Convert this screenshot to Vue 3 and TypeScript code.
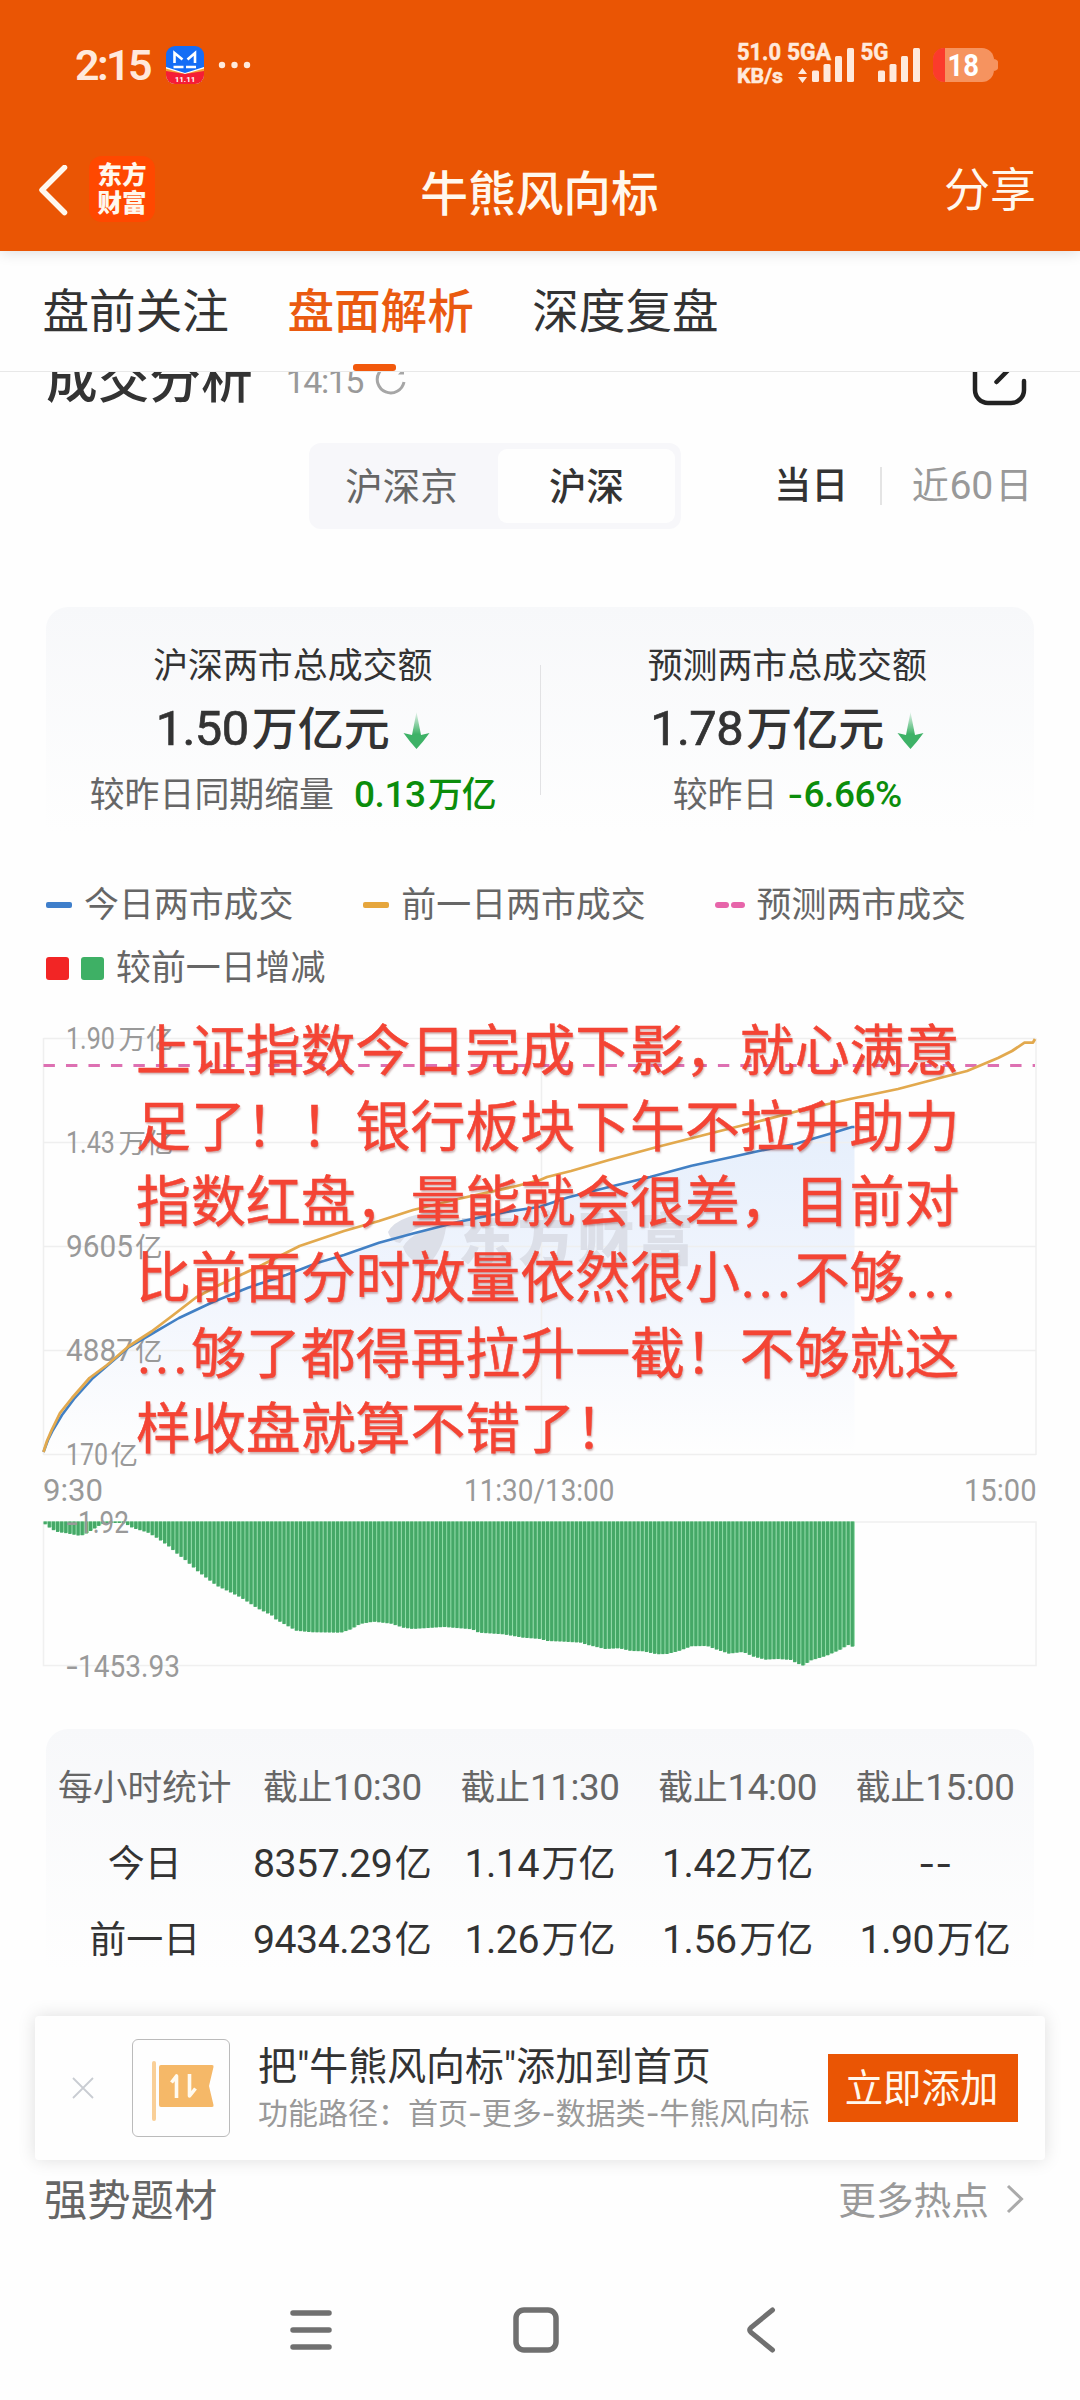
<script setup lang="ts">
import { h, type FunctionalComponent } from 'vue'

// Mixed text: digits, hyphens and ideographs each get their own span.
const Mix: FunctionalComponent<{ t: string }> = (props) =>
  h(
    'span',
    { class: 'mix' },
    (props.t.match(/[0-9.:/%]+|-+|[^0-9.:/%-]+/g) ?? []).map((s) =>
      h('span', { class: /^[0-9]/.test(s) ? 'num' : s[0] === '-' ? 'dash' : 'han' }, s),
    ),
  )
Mix.props = ['t']

type Pt = [number, number]

const tabs = ['盘前关注', '盘面解析', '深度复盘']

const yLabels = [
  { n: '1.90', u: '万亿', y: 1049, w: 49, ux: 118.5 },
  { n: '1.43', u: '万亿', y: 1153, w: 49, ux: 118.5 },
  { n: '9605', u: '亿', y: 1257, w: 67, ux: 135 },
  { n: '4887', u: '亿', y: 1360.5, w: 67, ux: 135 },
  { n: '170', u: '亿', y: 1464.5, w: 42, ux: 110.5 },
]
const gridY = [1038.5, 1142.5, 1246.5, 1350.5, 1454.5]

const prev: Pt[] = [
  [43.5, 1452], [47, 1441], [51.7, 1430], [60, 1413], [72, 1398], [89.5, 1378], [107, 1365], [129, 1346],
  [151.5, 1331.5], [172, 1316], [196, 1297.5], [217, 1286], [262, 1265], [299.6, 1246], [344, 1231],
  [379, 1221], [413, 1210], [458, 1199], [516.5, 1186], [540, 1180], [547, 1177], [571, 1171], [609, 1160],
  [657, 1147], [712, 1133], [760, 1121], [802, 1110], [850, 1099], [898, 1089], [936, 1079], [967, 1071],
  [998, 1058], [1012, 1051], [1024.5, 1042.7], [1033, 1042.5], [1035, 1039],
]
const today: Pt[] = [
  [43.5, 1452], [48, 1440], [53, 1430], [62, 1415], [74, 1399], [93, 1378], [129, 1347], [151.5, 1334],
  [179, 1318], [213.5, 1301.7], [248, 1287.7], [286, 1275], [317, 1263], [344, 1255], [379, 1242.7],
  [413, 1233.5], [458, 1222], [506, 1212], [540, 1206.7], [567.5, 1197.5], [609, 1187], [650, 1177],
  [691.5, 1165.7], [733, 1156.7], [760, 1150.7], [795, 1144], [829, 1134], [852, 1127], [854.5, 1127],
]
const line = (p: Pt[]) => p.map(([x, y]) => `${x},${y}`).join(' ')
const area = `${line(today)} 854.5,1454 43.5,1454`

// Depth of the green columns, as [x, y] knots joined linearly.
const depth: Pt[] = [
  [43, 1522.5], [48, 1526.7], [53, 1530], [58.5, 1532.3], [65, 1533], [79, 1535.7], [84, 1535], [91, 1530.7],
  [96, 1527.7], [101.6, 1524], [110, 1522.7], [119, 1522.3], [125.7, 1524], [132.6, 1528], [148, 1532.7],
  [158, 1538.7], [169, 1546.7], [177, 1553.7], [186, 1560.7], [198, 1571.7], [217, 1586], [225.5, 1590],
  [241, 1597.7], [258, 1608.7], [272, 1615.7], [275.5, 1619.3], [296, 1630.7], [311.6, 1632.3], [341, 1632.7],
  [351, 1629.3], [360, 1624], [373.6, 1621.7], [391, 1623.7], [403, 1627.7], [413, 1629], [444, 1627],
  [472, 1629.3], [478.6, 1632.7], [503, 1634.3], [523, 1637.7], [540, 1639], [547, 1641], [564, 1641.7],
  [581, 1642.7], [586.5, 1644.7], [605, 1649], [619, 1648.3], [631, 1651], [643, 1651.3], [657, 1654.3],
  [667, 1654], [678, 1651.3], [691.5, 1646.3], [707, 1646], [715.6, 1649.3], [729, 1653.7], [743, 1652],
  [753.5, 1656.7], [765.5, 1659.7], [777.6, 1659], [791, 1660], [796.5, 1663.3], [803.4, 1665.7],
  [810, 1660.7], [826, 1656], [839.6, 1650], [848, 1645], [854, 1647.3],
]
const at = (x: number) => {
  const i = Math.max(1, depth.findIndex((p) => p[0] >= x))
  const [a, b] = [depth[i - 1], depth[i]]
  return a[1] + ((b[1] - a[1]) * (x - a[0])) / (b[0] - a[0])
}
const bars = Array.from({ length: 197 }, (_, i) => {
  const x = 43.6 + i * 4.118
  return { x, h: Math.max(1, at(Math.min(x + 1.6, 853.5)) - 1522) }
})

const note = [
  '上证指数今日完成下影，就心满意',
  '足了！！银行板块下午不拉升助力',
  '指数红盘，量能就会很差，目前对',
  '比前面分时放量依然很小…不够…',
  '…够了都得再拉升一截！不够就这',
  '样收盘就算不错了！',
].map((s) => s.split(''))

const rows = [
  ['每小时统计', '截止10:30', '截止11:30', '截止14:00', '截止15:00'],
  ['今日', '8357.29亿', '1.14万亿', '1.42万亿', '--'],
  ['前一日', '9434.23亿', '1.26万亿', '1.56万亿', '1.90万亿'],
]
</script>

<template>
  <div class="screen">
    <header class="top">
      <div class="status">
        <span class="clock">2:15</span>
        <svg class="app" width="38" height="38" viewBox="0 0 38 38">
          <defs><clipPath id="appc"><rect width="38" height="38" rx="9" /></clipPath></defs>
          <g clip-path="url(#appc)">
            <rect width="38" height="38" fill="#156df5" />
            <path d="M0 21 L19 27 L38 21 V38 H0Z" fill="#fff" />
            <path d="M0 22.500 L19 28 L38 22.500 V38 H0Z" fill="#f5a13a" />
            <path d="M0 25 L19 28 L38 25 V38 H0Z" fill="#f51d35" />
            <path d="M8.500 17 V7 L16.500 13.500 M21.500 13.500 L29 7 V17" fill="none" stroke="#fff" stroke-width="2.600" />
            <path d="M7.500 21 H17.500 M20 21 H30" stroke="#fff" stroke-width="2.400" />
          </g>
          <text x="19" y="35.500" class="tiny" text-anchor="middle">11.11</text>
        </svg>
        <svg class="dots" width="34" height="8" viewBox="0 0 34 8" fill="#ffe9dc">
          <circle cx="4" cy="4" r="3.200" /><circle cx="16.500" cy="4" r="3.200" /><circle cx="29" cy="4" r="3.200" />
        </svg>
        <svg class="signals" width="264" height="50" viewBox="736 40 264 50" fill="#ffe9dc">
          <g stroke="#ffe9dc" stroke-width=".5">
            <text x="737" y="60" class="sig" textLength="44" lengthAdjust="spacingAndGlyphs">51.0</text>
            <text x="737" y="83" class="sig small" textLength="46" lengthAdjust="spacingAndGlyphs">KB/s</text>
            <text x="787" y="60" class="sig" textLength="44" lengthAdjust="spacingAndGlyphs">5GA</text>
            <text x="860.500" y="60" class="sig" textLength="28" lengthAdjust="spacingAndGlyphs">5G</text>
          </g>
          <path d="M802.500 68 l4.500 6 h-9z M802.500 83 l4.500 -6 h-9z" />
          <rect x="812" y="70.500" width="7" height="11.500" rx="1.500" /><rect x="823.500" y="64" width="7" height="18" rx="1.500" />
          <rect x="835" y="56" width="7" height="26" rx="1.500" /><rect x="847" y="48" width="7" height="34" rx="1.500" />
          <rect x="878" y="70.500" width="7" height="11.500" rx="1.500" /><rect x="889.500" y="64" width="7" height="18" rx="1.500" />
          <rect x="901" y="56" width="7" height="26" rx="1.500" /><rect x="913" y="48" width="7" height="34" rx="1.500" />
          <rect x="933" y="48" width="61" height="34" rx="12" fill="#f6935f" />
          <path d="M994 59 q4 1 4 3 v6 q0 2 -4 3z" fill="#f6935f" />
          <path d="M945 48 h-1 a11 11 0 0 0 -11 11 v12 a11 11 0 0 0 11 11 h1z" fill="#fb3b2c" />
          <text x="947.500" y="75.500" class="sig pct" textLength="31.500" lengthAdjust="spacingAndGlyphs">18</text>
        </svg>
      </div>
      <div class="nav">
        <svg width="32" height="52" viewBox="0 0 32 52" fill="none" stroke="#fff8ee" stroke-width="5.500" stroke-linecap="round" stroke-linejoin="round">
          <path d="M26.500 2.500 L4 25 L26.500 47.500" />
        </svg>
        <div class="logo"><span>东方</span><span>财富</span></div>
        <h1>牛熊风向标</h1>
        <span class="share">分享</span>
      </div>
    </header>

    <nav class="tabs">
      <span v-for="(t, i) in tabs" :key="t" :class="{ on: i === 1 }">{{ t }}</span>
    </nav>

    <section class="heading">
      <div class="heading-in">
        <h2>成交分析</h2>
        <span class="time">14:15</span>
        <svg class="reload" width="34" height="34" viewBox="0 0 34 34" fill="none" stroke="#a6a6a6" stroke-width="3">
          <path d="M26 6.500 A13.500 13.500 0 1 0 30 19" /><path d="M24 11.500 H30 V5Z" fill="#a6a6a6" stroke="none" />
        </svg>
        <svg class="edit" width="56" height="56" viewBox="0 0 56 56" fill="none" stroke="#222" stroke-width="4.500" stroke-linecap="round">
          <path d="M28 3 H16 A12 12 0 0 0 4 15 V37 A13 13 0 0 0 17 50 H40 A13 13 0 0 0 53 37 V28" /><path d="M25.500 29 L50 4" />
        </svg>
      </div>
    </section>

    <section class="switches">
      <div class="seg"><span>沪深京</span><span class="on">沪深</span></div>
      <div class="range"><b>当日</b><i></i><Mix t="近60日" /></div>
    </section>

    <section class="summary">
      <div class="cell">
        <p class="k">沪深两市总成交额</p>
        <p class="v"><Mix t="1.50万亿元" />
          <svg width="27" height="37" viewBox="0 0 27 37"><defs><linearGradient id="ga" x1="0" y1="0" x2="0" y2="1"><stop offset="0" stop-color="#3eb267" stop-opacity=".1" /><stop offset=".6" stop-color="#3eb267" /></linearGradient></defs><path d="M13.500 0 L18 23 L26.500 21 Q20 30 13.500 37 Q7 30 .5 21 L9 23Z" fill="url(#ga)" /></svg>
        </p>
        <p class="d">较昨日同期缩量<em class="wide"><Mix t="0.13万亿" /></em></p>
      </div>
      <i class="rule"></i>
      <div class="cell">
        <p class="k">预测两市总成交额</p>
        <p class="v"><Mix t="1.78万亿元" />
          <svg width="27" height="37" viewBox="0 0 27 37"><path d="M13.500 0 L18 23 L26.500 21 Q20 30 13.500 37 Q7 30 .5 21 L9 23Z" fill="url(#ga)" /></svg>
        </p>
        <p class="d">较昨日<em><Mix t="-6.66%" /></em></p>
      </div>
    </section>

    <section class="legend">
      <div class="lrow">
        <span class="l1"><i class="bar blue"></i>今日两市成交</span>
        <span class="l2"><i class="bar gold"></i>前一日两市成交</span>
        <span class="l3"><i class="dot"></i><i class="dot"></i>预测两市成交</span>
      </div>
      <div class="lrow">
        <span class="l4"><i class="sq red"></i><i class="sq green"></i>较前一日增减</span>
      </div>
    </section>

    <section class="charts">
      <svg width="1080" height="700" viewBox="0 1000 1080 700">
        <defs>
          <linearGradient id="fill" x1="0" y1="1127" x2="0" y2="1454" gradientUnits="userSpaceOnUse">
            <stop offset="0" stop-color="#e6effc" /><stop offset=".5" stop-color="#f1f5fd" /><stop offset="1" stop-color="#fefefe" />
          </linearGradient>
        </defs>
        <polygon :points="area" fill="url(#fill)" />
        <g stroke="#efefef" stroke-width="1.500">
          <path v-for="y in gridY" :key="y" :d="`M43.500 ${y} H1036`" />
          <path d="M43.500 1038 V1455 M541.500 1038 V1455 M1036 1038 V1455" />
        </g>
        <g fill="#dcdfe8">
          <path d="M388 1232 Q398 1213 447 1211 Q436 1216 430 1226 Q412 1226 400 1243 Q391 1242 388 1232Z" />
          <path d="M403 1247 Q412 1230 446 1227 Q443 1252 424 1269 Q422 1260 415 1261 Q407 1258 403 1247Z" />
          <text x="458" y="1260" class="mark" textLength="236">东方财富</text>
        </g>
        <g class="axis">
          <template v-for="l in yLabels" :key="l.y">
            <text x="66" :y="l.y" :textLength="l.w" lengthAdjust="spacingAndGlyphs">{{ l.n }}</text>
            <text :x="l.ux" :y="l.y" class="unit">{{ l.u }}</text>
          </template>
        </g>
        <path d="M43.500 1065.500 H1035" stroke="#dd70b2" stroke-width="2.800" stroke-dasharray="11.400 11.080" />
        <polyline :points="line(today)" fill="none" stroke="#4280c4" stroke-width="2.600" stroke-linejoin="round" />
        <polyline :points="line(prev)" fill="none" stroke="#e2a94e" stroke-width="2.800" stroke-linejoin="round" />

        <g class="axis">
          <text x="43" y="1501" textLength="60" lengthAdjust="spacingAndGlyphs">9:30</text>
          <text x="464" y="1501" textLength="150.500" lengthAdjust="spacingAndGlyphs">11:30/13:00</text>
          <text x="964" y="1501" textLength="72.500" lengthAdjust="spacingAndGlyphs">15:00</text>
        </g>
        <rect x="43.500" y="1522" width="992.500" height="143.500" fill="none" stroke="#f0f0f0" stroke-width="1.500" />
        <g fill="#8edba6"><rect v-for="b in bars" :key="b.x" :x="b.x" y="1521.500" width="4.118" :height="b.h" /></g>
        <g fill="#45a867"><rect v-for="b in bars" :key="b.x" :x="b.x" y="1521.500" width="3.100" :height="b.h + .5" /></g>
        <g class="axis">
          <text x="65" y="1532.500" class="hy" textLength="14" lengthAdjust="spacingAndGlyphs">-</text>
          <text x="78" y="1532.500" textLength="51" lengthAdjust="spacingAndGlyphs">1.92</text>
          <text x="65" y="1677" class="hy" textLength="14" lengthAdjust="spacingAndGlyphs">-</text>
          <text x="78" y="1677" textLength="102" lengthAdjust="spacingAndGlyphs">1453.93</text>
        </g>
      </svg>
      <div class="note">
        <p v-for="(l, i) in note" :key="i"><span v-for="(c, j) in l" :key="j" :class="{ el: c === '…' }">{{ c === '…' ? '...' : c }}</span></p>
      </div>
    </section>

    <section class="table">
      <div v-for="(r, i) in rows" :key="i" class="tr" :class="{ th: i === 0 }">
        <span v-for="c in r" :key="c"><Mix :t="c" /></span>
      </div>
    </section>

    <aside class="banner">
      <svg class="close" width="22" height="22" viewBox="0 0 22 22" stroke="#c9ccd2" stroke-width="1.800"><path d="M1 1 L21 21 M21 1 L1 21" /></svg>
      <div class="flag">
        <svg width="98" height="98" viewBox="0 0 98 98">
          <rect x="19" y="21" width="4" height="60" rx="2" fill="#f9cf97" />
          <path d="M28 25 H79 Q81 25 80.500 27 L76 46 L80.500 65 Q81 67 79 67 H28 Q26 67 26 65 V27 Q26 25 28 25Z" fill="#f5b868" />
          <path d="M38.500 42.500 L43.500 36 V58 M56.500 34 V56 L62.500 48.500" fill="none" stroke="#fffaf0" stroke-width="3.600" stroke-linejoin="round" />
        </svg>
      </div>
      <div class="msg">
        <p class="t">把"牛熊风向标"添加到首页</p>
        <p class="s"><Mix t="功能路径：首页-更多-数据类-牛熊风向标" /></p>
      </div>
      <button>立即添加</button>
    </aside>

    <section class="more">
      <span>强势题材</span>
      <span class="r">更多热点
        <svg width="18" height="30" viewBox="0 0 18 30" fill="none" stroke="#aaa" stroke-width="3"><path d="M2 2 L15.500 15 L2 28" /></svg>
      </span>
    </section>

    <footer class="sys">
      <svg width="44" height="44" viewBox="0 0 44 44" stroke="#707070" stroke-width="5.500" stroke-linecap="round"><path d="M4 5 H40 M4 22 H40 M4 39 H40" /></svg>
      <svg width="46" height="46" viewBox="0 0 46 46" fill="none" stroke="#707070" stroke-width="5.500"><rect x="3" y="3" width="40" height="40" rx="8" /></svg>
      <svg width="30" height="46" viewBox="0 0 30 46" fill="none" stroke="#707070" stroke-width="5" stroke-linecap="round"><path d="M26.500 3 L5 20.500 Q2.500 23 5 25.500 L26.500 43" /></svg>
    </footer>
  </div>
</template>

<style>
body { background: #fefefe; }
.mix .num { font-size: 1.06em; line-height: 0; letter-spacing: -0.012em; }
.mix .num + .han { margin-left: 0.07em; }
.mix .dash { font-family: Inter, sans-serif; line-height: 0; }
</style>

<style scoped>
.screen {
  width: 1080px;
  height: 2400px;
  overflow: hidden;
  display: flex;
  flex-direction: column;
  background: #fefefe;
  color: #333;
  font-family: Roboto, "Noto Sans CJK SC", sans-serif;
}
p, h1, h2 { margin: 0; font-weight: 400; }
i, em { font-style: normal; }
svg { display: block; flex: none; }

.top { height: 251px; flex: none; background: #ea5504; color: #fff8ee; position: relative; z-index: 2; box-shadow: 0 1px 14px rgba(0, 0, 0, 0.14); }
.status { height: 130px; display: flex; align-items: center; padding-left: 75px; }
.clock { width: 91px; font-size: 43px; font-weight: 600; line-height: 50px; color: #ffe9dc; letter-spacing: -2.6px; }
.app { margin-right: 14px; }
.tiny { font: 700 8px Roboto, sans-serif; fill: #fff; }
.signals { margin-left: 484px; }
.sig { font: 700 23.5px Roboto, sans-serif; }
.sig.small { font-size: 21px; }
.sig.pct { font-size: 31px; fill: #fff; }
.nav { height: 121px; display: flex; align-items: center; padding: 0 44px 0 38px; }
.logo { width: 66px; height: 63px; padding-bottom: 3px; margin: -3px 0 0 19px; border-radius: 13px; background: #ff4800; display: flex; flex-direction: column; align-items: center; justify-content: center; font: 900 24.5px/28px "Noto Sans CJK SC", sans-serif; }
.nav h1 { flex: 1; text-align: center; font-size: 47.700px; line-height: 60px; padding: 8px 20px 0 0; font-weight: 500; }
.share { font-size: 46px; line-height: 60px; margin-top: -2px; }

.tabs { height: 120px; flex: none; border-bottom: 1px solid #e8e8e8; display: flex; gap: 58.500px; padding-left: 42.500px; background: #fefefe; position: relative; z-index: 1; }
.tabs span { position: relative; font-size: 46.600px; line-height: 123.500px; }
.tabs .on { color: #ea5a10; font-weight: 500; }
.tabs .on::after { content: ""; position: absolute; left: 66px; top: 113px; width: 43px; height: 7px; border-radius: 3px; background: #f2590c; }

.heading { height: 71px; flex: none; overflow: hidden; }
.heading-in { height: 60px; margin-top: -21px; display: flex; align-items: center; padding: 0 53px 0 46px; }
.heading h2 { font-size: 51.700px; font-weight: 500; line-height: 60px; }
.time { font-size: 34px; line-height: 60px; color: #999; margin-left: 33px; letter-spacing: -1.5px; }
.reload { margin: -3px 0 0 11px; }
.edit { margin-left: auto; }

.switches { height: 86px; flex: none; display: flex; align-items: center; padding: 0 47px 0 309px; }
.seg { width: 372px; height: 86px; box-sizing: border-box; padding: 6px; border-radius: 12px; background: #f7f7fa; display: flex; }
.seg span { width: 173px; margin-right: 10px; text-align: center; font-size: 37.500px; line-height: 77px; color: #666; }
.seg .on { width: 177px; margin: 0; border-radius: 9px; background: #fefefe; color: #333; font-weight: 500; }
.range { flex: 1; display: flex; align-items: center; justify-content: flex-end; font-size: 37px; line-height: 79px; color: #999; }
.range .mix { letter-spacing: .7px; }
.range b { font-weight: 500; color: #333; }
.range i { width: 1.500px; height: 38px; background: #e4e4e4; margin: 0 30px 0 32px; }

.summary { height: 225px; flex: none; margin: 78px 46px 0; border-radius: 22px 22px 0 0; background: linear-gradient(#f7f8fa, #fefefe); display: flex; align-items: center; }
.cell { flex: 1; text-align: center; padding-top: 24px; }
.rule { width: 1px; height: 130px; background: #e2e2e4; margin-top: 20px; }
.k { font-size: 34.900px; line-height: 50px; padding-top: 5px; }
.v { display: flex; justify-content: center; align-items: center; gap: 13px; font-size: 46px; line-height: 64px; font-weight: 500; margin: 5px 0 5px; }
.v :deep(.num) { font-weight: 400; -webkit-text-stroke: .7px #333; }
.v svg { margin-top: 2px; }
.d { font-size: 34.900px; line-height: 60px; color: #666; }
.d em { color: #0b8d0b; font-weight: 500; margin-left: 10px; }
.d em.wide { margin-left: 20px; letter-spacing: -1px; }

.legend { padding: 42px 0 0 46px; height: 126px; flex: none; color: #666; font-size: 34.900px; }
.lrow { display: flex; height: 63px; align-items: center; }
.lrow span { display: flex; align-items: center; line-height: 63px; }
.bar { width: 26px; height: 6px; border-radius: 2px; margin: -2px 12px 0 0; }
.blue { background: #3f7fcb; }
.gold { background: #e6a63c; }
.l2 { margin-left: 70px; }
.l3 { margin-left: 69px; }
.dot { width: 14px; height: 6px; border-radius: 3px; background: #e765aa; margin: -2px 2px 0 0; }
.dot + .dot { margin-right: 12px; }
.sq { width: 23px; height: 23px; border-radius: 3px; margin: -1px 12px 0 0; }
.red { background: #f22525; }
.green { background: #3eb065; }

.charts { height: 700px; flex: none; position: relative; }
.axis { fill: #999; font: 400 30.500px Roboto, sans-serif; }
.unit { font: 400 27.500px "Noto Sans CJK SC", sans-serif; }
.hy { font-family: Inter, sans-serif; }
.mark { font: 900 57px "Noto Sans CJK SC", sans-serif; }
.note { position: absolute; left: 136px; top: 14px; color: #f44434; font-size: 54.900px; line-height: 75.700px; font-weight: 500; -webkit-text-stroke: .5px #f44434; text-shadow: 1px 2px 2px rgba(120, 40, 40, 0.35); white-space: nowrap; }
.note p { display: flex; height: 75.700px; }
.note span { width: 54.900px; flex: none; }
.note .el { letter-spacing: 3.600px; padding-left: 1px; box-sizing: border-box; }

.table { height: 241px; flex: none; margin: 29px 46px 0; border-radius: 22px 22px 0 0; background: linear-gradient(#f7f8fa, #fefefe); padding-top: 21px; box-sizing: border-box; }
.tr { display: flex; height: 76.500px; line-height: 76.500px; font-size: 37px; }
.tr > span { flex: 1 1 0; width: 0; text-align: center; white-space: nowrap; }
.th { font-size: 34.700px; color: #666; }

.banner { position: relative; z-index: 1; height: 144px; flex: none; margin: 46px 35px 0; box-sizing: border-box; border-radius: 4px; background: #fefefe; box-shadow: 0 0 18px rgba(0, 0, 0, 0.13); display: flex; align-items: center; padding: 0 27px 0 37px; }
.flag { width: 98px; height: 98px; box-sizing: border-box; border: 1px solid #bbb; border-radius: 6px; margin-left: 38px; overflow: hidden; }
.msg { margin-left: 28px; flex: 1; white-space: nowrap; padding-top: 3px; }
.msg .t { font-size: 38.900px; line-height: 48px; }
.msg .s { font-size: 30px; line-height: 46px; color: #999; }
.banner button { width: 190px; height: 68px; border: 0; padding: 2px 3px 0 0; background: #ea5504; color: #fff8ee; font: 400 38.400px/66px Roboto, "Noto Sans CJK SC", sans-serif; }

.more { height: 80px; flex: none; display: flex; justify-content: space-between; align-items: center; padding: 0 56px 0 44px; font-size: 43.300px; color: #666; box-sizing: border-box; padding-bottom: 6px; }
.more .r { display: flex; align-items: center; gap: 17px; font-size: 37.700px; color: #999; }
.more svg { margin-top: 3px; }

.sys { flex: 1; display: flex; align-items: center; padding: 20px 0 0 289px; }
.sys svg:nth-child(2) { margin-left: 180px; }
.sys svg:nth-child(3) { margin-left: 187px; }
</style>
